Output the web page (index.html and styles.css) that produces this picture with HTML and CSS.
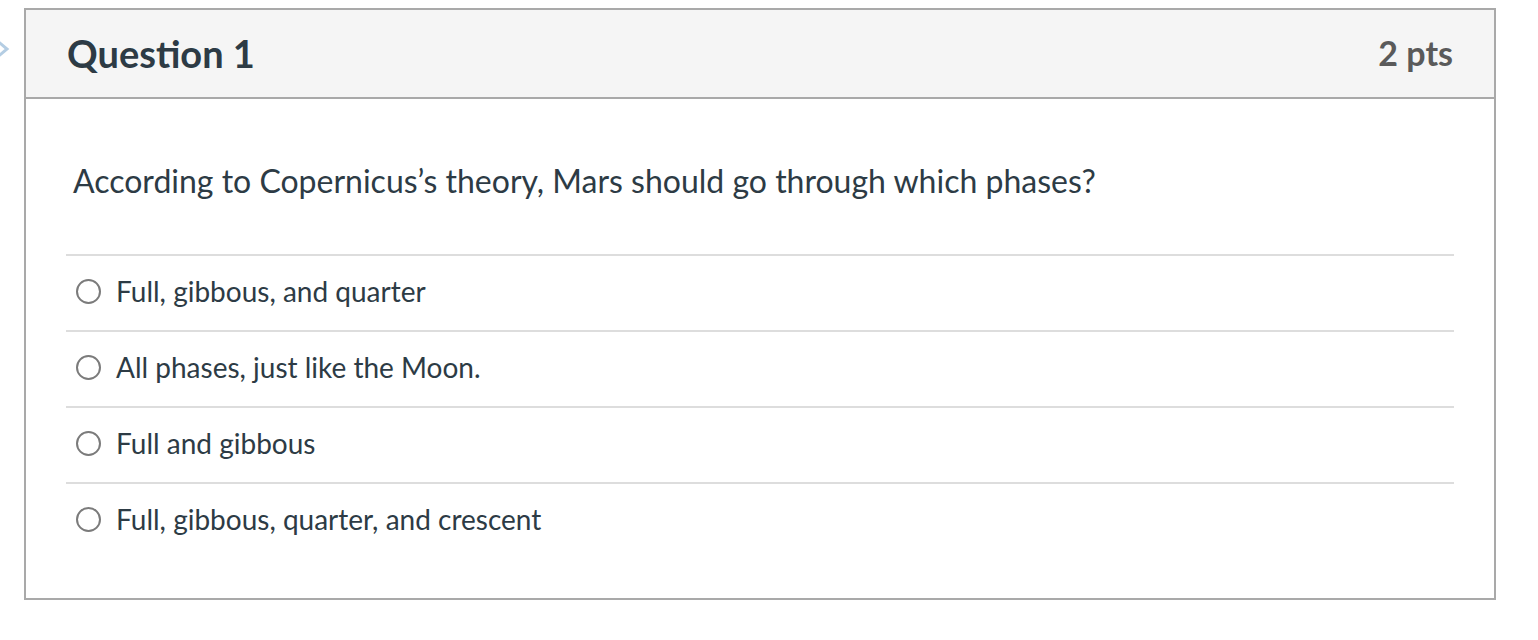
FILE: index.html
```html
<!DOCTYPE html>
<html>
<head>
<meta charset="utf-8">
<link rel="stylesheet" href="styles.css">
</head>
<body>
<div class="page">
  <svg class="flag" width="12" height="24" viewBox="0 0 12 24"><path d="M-5 2 L7 12 L-5 22" fill="none" stroke="#b4cde3" stroke-width="3"/></svg>
  <div class="question">
    <div class="header">
      <h2 class="title">Question 1</h2>
      <span class="points">2 pts</span>
    </div>
    <div class="content">
      <p class="text">According to Copernicus’s theory, Mars should go through which phases?</p>
      <div class="answers">
        <label class="answer"><span class="radio"></span><span class="label">Full, gibbous, and quarter</span></label>
        <label class="answer"><span class="radio"></span><span class="label">All phases, just like the Moon.</span></label>
        <label class="answer"><span class="radio"></span><span class="label">Full and gibbous</span></label>
        <label class="answer"><span class="radio"></span><span class="label">Full, gibbous, quarter, and crescent</span></label>
      </div>
    </div>
  </div>
</div>
</body>
</html>
```

FILE: styles.css
```css
html, body {
  margin: 0;
  padding: 0;
  background: #fff;
}
body {
  font-family: Lato, "Open Sans", sans-serif;
  color: #2d3b45;
}
.page {
  position: relative;
  padding: 8px 0 0 24px;
}
.flag {
  position: absolute;
  left: 0;
  top: 37px;
}
.question {
  box-sizing: border-box;
  width: 1472px;
  height: 592px;
  border: 2px solid #a9a9a9;
}
.header {
  box-sizing: border-box;
  height: 89px;
  background: #f5f5f5;
  border-bottom: 2px solid #a9a9a9;
  display: flex;
  align-items: center;
  justify-content: space-between;
  padding: 0 41px 1px;
}
.title {
  margin: 0;
  font-size: 38px;
  font-weight: 700;
  line-height: 1;
  color: #2d3b45;
}
.points {
  font-size: 34px;
  font-weight: 700;
  line-height: 1;
  color: #5a5a5a;
}
.content {
  padding: 0 40px;
}
.text {
  margin: 0;
  padding: 63px 0 0 7px;
  height: 92px;
  font-size: 32px;
  line-height: 38px;
}
.answers {
  display: flex;
  flex-direction: column;
}
.answer {
  box-sizing: border-box;
  display: flex;
  align-items: center;
  height: 76px;
  border-top: 2px solid #dddddd;
  padding: 0 0 4px 10px;
}
.radio {
  box-sizing: border-box;
  width: 25px;
  height: 25px;
  border: 2px solid #7b7b7b;
  border-radius: 50%;
  margin-right: 15px;
}
.label {
  font-size: 28px;
  line-height: 32px;
  color: #2d3b45;
}
```
